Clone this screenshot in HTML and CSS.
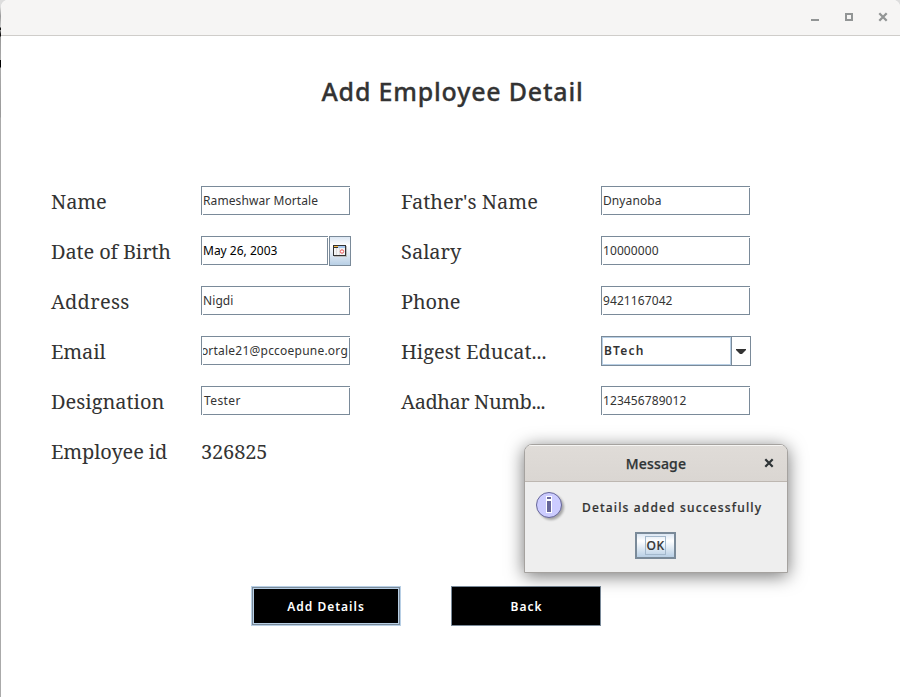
FILE: index.html
```html
<!DOCTYPE html>
<html lang="en">
<head>
<meta charset="utf-8">
<title>Add Employee Detail</title>
<link rel="stylesheet" href="styles.css">
</head>
<body>
<div class="desktop">
  <main class="window">
    <header class="titlebar">
      <svg class="controls" width="80" height="12" viewBox="0 0 80 12" fill="none" stroke="#929595" stroke-width="2">
        <path d="M1 8H9"/><path d="M36 2H42V8H36Z"/><path d="M69.3 1.3L76.7 8.7M76.7 1.3L69.3 8.7" stroke-width="2.3"/>
      </svg>
    </header>
    <h1 class="heading">Add Employee Detail</h1>
    <div class="form">
      <label class="label snug">Name</label><div class="field">Rameshwar Mortale</div>
      <label class="label">Father's Name</label><div class="field">Dnyanoba</div>
      <label class="label snug">Date of Birth</label>
      <div class="date"><div class="field field-date">May 26, 2003</div>
        <div class="date-button">
          <svg width="14" height="12" viewBox="0 0 14 12">
            <path fill="#bbb" d="M1 1H14V12H1Z"/><path fill="#333" d="M0 0H13V11H0Z"/><path fill="#f3f3f3" d="M1 3H12V10H1Z"/><path fill="#ffbd45" d="M1 1H5V2H1Z"/><path fill="#a9c9ef" d="M5 1H12V3H5Z"/><path fill="#ddd" d="M3 3H4V10H3ZM6 3H7V10H6Z"/><circle cx="9" cy="6.5" r="1.7" fill="#fff" stroke="#ec5555"/>
          </svg>
        </div>
      </div>
      <label class="label">Salary</label><div class="field">10000000</div>
      <label class="label loose">Address</label><div class="field">Nigdi</div>
      <label class="label snug">Phone</label><div class="field">9421167042</div>
      <label class="label snug">Email</label><div class="field field-end"><span>ortale21@pccoepune.org</span></div>
      <label class="label">Higest Educat...</label>
      <div class="combo"><div class="combo-value">BTech</div><div class="combo-arrow"><svg width="10" height="5" viewBox="0 0 10 5"><path d="M0 0H10V1L6 5H4L0 1Z" fill="#333"/></svg></div></div>
      <label class="label">Designation</label><div class="field tester">Tester</div>
      <label class="label tight">Aadhar Numb...</label><div class="field">123456789012</div>
      <label class="label snug">Employee id</label><div class="label snug">326825</div>
    </div>
    <div class="actions">
      <button class="action action-focused">Add Details</button>
      <button class="action">Back</button>
    </div>
  </main>
  <section class="dialog">
    <header class="dialog-bar">
      <span class="dialog-title">Message</span>
      <svg class="dialog-close" width="10" height="10" viewBox="0 0 10 10"><path d="M1.3 1.3L8.7 8.7M8.7 1.3L1.3 8.7" stroke="#2e3436" stroke-width="2.2"/></svg>
    </header>
    <div class="dialog-body">
      <div class="dialog-row">
        <svg class="info" width="32" height="32" viewBox="0 0 32 32">
          <circle cx="14" cy="13" r="12.5" fill="#ccccff" stroke="#666699"/>
          <path d="M11 4H17V8H11ZM11 8H17V21H11Z" fill="#fff"/><path d="M12 5H16V7H12ZM12 9H16V20H12Z" fill="#666699"/>
        </svg>
        <span class="message">Details added successfully</span>
      </div>
      <button class="ok"><span class="ok-focus">OK</span></button>
    </div>
  </section>
</div>
</body>
</html>
```
FILE: styles.css
```css
* { box-sizing: border-box; }
body { margin: 0; font-family: "Noto Sans", sans-serif; color: #333; }
button { font: inherit; margin: 0; border-radius: 0; padding: 0; }
.desktop { position: relative; width: 900px; height: 697px; overflow: hidden; padding-left: 1px; background: linear-gradient(#ddd 0, #ddd 7px, #999 16px, #ccc 27px, #111 28px, #111 30px, #aaa 30px, #111 34px, #111 36px, #999 37px, #aaa 60px, #000 60px, #000 67px, #aaa 68px, #999 117px, #aaa 118px); }
.window { height: 697px; background: #fff; border-radius: 7px 7px 0 0; overflow: hidden; }
.titlebar { height: 36px; background: #f6f5f4; border-bottom: 1px solid #cfcdca; display: flex; justify-content: flex-end; padding: 12px 10px 0 0; }
.heading { margin: 37px 0 0; padding-left: 3px; width: 900px; height: 37px; line-height: 37px; text-align: center; font-size: 25px; font-weight: 500; letter-spacing: 0.8px; white-space: nowrap; -webkit-text-stroke: 0.3px currentColor; }
.form { margin: 76px 0 0 50px; display: grid; grid-template-columns: 150px 200px 200px 150px; grid-auto-rows: 30px; row-gap: 20px; }
.label { font-family: "Noto Serif", "Droid Serif", "DejaVu Serif Condensed", "DejaVu Serif", serif; font-size: 20px; line-height: 32px; white-space: nowrap; }
.snug { letter-spacing: -0.12px; }
.tight { letter-spacing: -0.45px; }
.loose { letter-spacing: 0.3px; }
.field { position: relative; width: 149px; height: 29px; border: 1px solid #7a8a99; padding-left: 1px; font-size: 12px; letter-spacing: 0.09px; line-height: 27px; white-space: nowrap; overflow: hidden; }
/* Metal-style bevel: a one-pixel notch at two corners */
.field { overflow: visible; }
.field::before, .field::after { content: ""; position: absolute; width: 1px; height: 1px; background: #fff; }
.field::before { right: -1px; top: 0; }
.field::after { left: 0; bottom: -1px; }
.tester { padding-left: 2px; letter-spacing: 0.4px; }
.field-end { display: flex; justify-content: flex-end; padding: 0 0 0 1px; letter-spacing: 0.22px; }
.field-end span { display: flex; justify-content: flex-end; width: 146px; padding-right: 1px; overflow: hidden; }
.date { display: flex; gap: 1px; }
.field-date { width: 127px; color: #000; letter-spacing: 0; }
.date-button { width: 22px; height: 30px; border: 1px solid #7a8a99; background: linear-gradient(#dce7f3, #fff 30%, #b8cfe5); display: flex; align-items: center; justify-content: center; }
.combo { width: 150px; height: 30px; display: flex; border: 1px solid #7a8a99; }
.combo-value { width: 129px; border: 1px solid #b8cfe5; padding-left: 1px; font-size: 12px; font-weight: 600; letter-spacing: 1.2px; line-height: 26px; }
.combo-arrow { flex: 1; border-left: 1px solid #7a8a99; display: flex; align-items: center; justify-content: center; padding: 1px 1px 0 0; }
.actions { display: flex; gap: 50px; margin: 120px 0 0 250px; }
.action { width: 150px; height: 40px; border: 1px solid #7a8a99; background: #000; color: #fff; font-size: 12px; font-weight: 600; letter-spacing: 1px; padding-left: 1px; }
.action-focused { border-color: #b8cfe5; padding-left: 0; box-shadow: inset 0 0 0 1px #7a8a99, inset 0 0 0 2px #b8cfe5; }
.dialog { position: absolute; left: 524px; top: 444px; width: 264px; height: 129px; border: 1px solid #a5a29f; border-radius: 8px 8px 0 0; background: #eee; box-shadow: 0 3px 18px rgba(0,0,0,.55); overflow: hidden; }
.dialog-bar { height: 37px; display: flex; align-items: center; justify-content: center; border-bottom: 1px solid #bdb7b1; background: linear-gradient(#e0dcd8, #dad6d2); box-shadow: inset 0 1px #f6f5f3; position: relative; }
.dialog-title { font-size: 14px; font-weight: 500; letter-spacing: 0.15px; -webkit-text-stroke: 0.25px currentColor; color: #2e3436; }
.dialog-close { position: absolute; right: 13px; top: 13px; }
.dialog-body { height: 90px; padding: 10px 10px 0; display: flex; flex-direction: column; align-items: flex-start; }
.dialog-row { display: flex; height: 40px; }
.info { filter: drop-shadow(2px 2px 1px rgba(0,0,0,.3)); }
.message { margin-left: 15px; font-size: 12px; line-height: 31px; font-weight: 500; letter-spacing: 1.16px; -webkit-text-stroke: 0.2px currentColor; white-space: nowrap; }
.ok { margin-left: 100px; width: 41px; height: 27px; border: 2px solid #7a8a99; background: linear-gradient(#dce7f3, #fff 30%, #b8cfe5); display: flex; align-items: center; justify-content: center; color: #333; }
.ok-focus { border: 1px solid #a3b8cc; width: 21px; height: 19px; line-height: 17px; font-size: 12px; font-weight: 500; letter-spacing: 0.5px; -webkit-text-stroke: 0.2px currentColor; text-align: center; }
```
